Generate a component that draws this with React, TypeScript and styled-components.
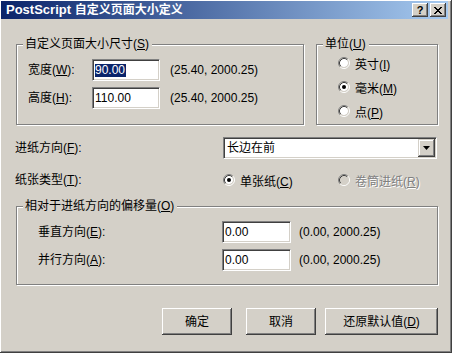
import React from 'react'
import styled, { createGlobalStyle } from 'styled-components'

const GlobalStyle = createGlobalStyle`
  html, body {
    margin: 0;
    padding: 0;
    background: #d4d0c8;
  }
  body {
    font-family: "Liberation Sans", "Noto Sans CJK SC", sans-serif;
    font-size: 12px;
    color: #000;
  }
`

const Window = styled.div`
  width: 452px;
  height: 353px;
  box-sizing: border-box;
  padding: 1px 4px 4px 1px;
  background: #d4d0c8;
  box-shadow: inset -1px -1px #404040, inset 1px 1px #fff, inset -2px -2px #808080;
  display: flex;
  flex-direction: column;
`

const TitleBar = styled.div`
  height: 18px;
  display: flex;
  align-items: center;
  padding-left: 5px;
  padding-right: 2px;
  background: linear-gradient(to right, #0a246a, #a6caf0);
  color: #fff;
  font-weight: bold;
  font-size: 13px;
  line-height: 18px;
`

const TitleText = styled.div`
  flex: 1;
  white-space: nowrap;
  span {
    font-size: 12px;
  }
`

const CaptionButton = styled.div`
  width: 16px;
  height: 14px;
  box-sizing: border-box;
  margin-left: 2px;
  background: #d4d0c8;
  box-shadow: inset -1px -1px #404040, inset 1px 1px #fff, inset -2px -2px #808080;
  color: #000;
  font-size: 11px;
  line-height: 14px;
  text-align: center;
  display: flex;
  align-items: center;
  justify-content: center;
`

const Body = styled.div`
  flex: 1;
  padding: 25px 10px 0 14px;
  display: flex;
  flex-direction: column;
`

const TopRow = styled.div`
  display: flex;
  gap: 12px;
  margin-left: 1px;
`

const Group = styled.div<{ $w?: number; $h: number; $pt: number; $pl: number }>`
  position: relative;
  box-sizing: border-box;
  width: ${p => (p.$w ? `${p.$w}px` : 'auto')};
  height: ${p => p.$h}px;
  border: 1px solid #808080;
  box-shadow: 1px 1px #fff, inset 1px 1px #fff;
  padding: ${p => p.$pt}px 0 0 ${p => p.$pl}px;
`

const GroupLabel = styled.div`
  position: absolute;
  top: -8px;
  left: 6px;
  padding: 0 3px 0 2px;
  background: #d4d0c8;
  line-height: 15px;
  white-space: nowrap;
`

const Key = styled.u`
  text-underline-offset: 1px;
`

const FieldRow = styled.div<{ $gap?: number }>`
  display: flex;
  align-items: center;
  height: 22px;
  & + & {
    margin-top: ${p => p.$gap ?? 6}px;
  }
`

const Label = styled.div<{ $w: number }>`
  width: ${p => p.$w}px;
  flex-shrink: 0;
  white-space: nowrap;
  line-height: 16px;
`

const Sunken = styled.div<{ $w: number }>`
  width: ${p => p.$w}px;
  height: 22px;
  box-sizing: border-box;
  flex-shrink: 0;
  background: #fff;
  border-style: solid;
  border-width: 1px;
  border-color: #808080 #fff #fff #808080;
  box-shadow: inset 1px 1px #404040, inset -1px -1px #d4d0c8;
  line-height: 20px;
  white-space: nowrap;
`

const FieldText = styled.span<{ $selected?: boolean }>`
  display: inline-block;
  margin-left: 2px;
  line-height: 13px;
  padding: 0 1px 0 0;
  background: ${p => (p.$selected ? '#0a246a' : 'transparent')};
  color: ${p => (p.$selected ? '#fff' : '#000')};
  vertical-align: middle;
`

const Range = styled.div<{ $ml: number }>`
  margin-left: ${p => p.$ml}px;
  white-space: nowrap;
`

const RadioList = styled.div`
  display: flex;
  flex-direction: column;
`

const RadioItem = styled.div<{ $w?: number; $disabled?: boolean }>`
  display: flex;
  align-items: center;
  gap: 5px;
  height: 24px;
  width: ${p => (p.$w ? `${p.$w}px` : 'auto')};
  white-space: nowrap;
  color: ${p => (p.$disabled ? '#808080' : '#000')};
  text-shadow: ${p => (p.$disabled ? '1px 1px #fff' : 'none')};
`

const FormRow = styled.div<{ $mt: number }>`
  display: flex;
  align-items: center;
  height: 22px;
  margin-top: ${p => p.$mt}px;
`

const SelectBox = styled(Sunken)`
  display: flex;
  align-items: center;
  padding-left: 3px;
`

const SelectValue = styled.div`
  flex: 1;
`

const DropButton = styled.div`
  width: 17px;
  height: 18px;
  box-sizing: border-box;
  margin-right: 1px;
  background: #d4d0c8;
  box-shadow: inset -1px -1px #404040, inset 1px 1px #d4d0c8, inset -2px -2px #808080, inset 2px 2px #fff;
  display: flex;
  align-items: center;
  justify-content: center;
`

const ButtonRow = styled.div`
  display: flex;
  justify-content: flex-end;
  margin-top: 23px;
`

const PushButton = styled.div<{ $w: number; $ml: number }>`
  width: ${p => p.$w}px;
  height: 27px;
  box-sizing: border-box;
  margin-left: ${p => p.$ml}px;
  background: #d4d0c8;
  box-shadow: inset -1px -1px #404040, inset 1px 1px #fff, inset -2px -2px #808080;
  display: flex;
  align-items: center;
  justify-content: center;
  line-height: 16px;
  white-space: nowrap;
`

const Radio = ({ checked, disabled }: { checked?: boolean; disabled?: boolean }) => (
  <svg width="12" height="12" viewBox="0 0 12 12" style={{ flexShrink: 0 }}>
    <circle cx="6" cy="6" r="4" fill={disabled ? '#d4d0c8' : '#fff'} />
    <path d="M2.11 9.89 A5.5 5.5 0 0 1 9.89 2.11" stroke="#808080" fill="none" />
    <path d="M9.89 2.11 A5.5 5.5 0 0 1 2.11 9.89" stroke="#fff" fill="none" />
    <path d="M2.82 9.18 A4.5 4.5 0 0 1 9.18 2.82" stroke="#404040" fill="none" />
    <path d="M9.18 2.82 A4.5 4.5 0 0 1 2.82 9.18" stroke="#d4d0c8" fill="none" />
    {checked && <circle cx="6" cy="6" r="2" fill="#000" />}
  </svg>
)

const App = () => {
  return (
    <>
      <GlobalStyle />
      <Window>
        <TitleBar>
          <TitleText>
            PostScript <span>自定义页面大小定义</span>
          </TitleText>
          <CaptionButton>?</CaptionButton>
          <CaptionButton>
            <svg width="8" height="7" viewBox="0 0 8 7">
              <path d="M0 0 L7 7 M1 0 L8 7 M7 0 L0 7 M8 0 L1 7" stroke="#000" strokeWidth="1" shapeRendering="crispEdges" />
            </svg>
          </CaptionButton>
        </TitleBar>

        <Body>
          <TopRow>
            <Group $w={288} $h={81} $pt={14} $pl={11}>
              <GroupLabel>
                自定义页面大小尺寸(<Key>S</Key>)
              </GroupLabel>
              <FieldRow>
                <Label $w={64}>
                  宽度(<Key>W</Key>):
                </Label>
                <Sunken $w={68}>
                  <FieldText $selected>90.00</FieldText>
                </Sunken>
                <Range $ml={10}>(25.40, 2000.25)</Range>
              </FieldRow>
              <FieldRow>
                <Label $w={64}>
                  高度(<Key>H</Key>):
                </Label>
                <Sunken $w={68}>
                  <FieldText>110.00</FieldText>
                </Sunken>
                <Range $ml={10}>(25.40, 2000.25)</Range>
              </FieldRow>
            </Group>

            <Group $w={122} $h={81} $pt={6} $pl={21}>
              <GroupLabel>
                单位(<Key>U</Key>)
              </GroupLabel>
              <RadioList>
                <RadioItem>
                  <Radio />
                  <span>
                    英寸(<Key>I</Key>)
                  </span>
                </RadioItem>
                <RadioItem>
                  <Radio checked />
                  <span>
                    毫米(<Key>M</Key>)
                  </span>
                </RadioItem>
                <RadioItem>
                  <Radio />
                  <span>
                    点(<Key>P</Key>)
                  </span>
                </RadioItem>
              </RadioList>
            </Group>
          </TopRow>

          <FormRow $mt={12}>
            <Label $w={208}>
              进纸方向(<Key>F</Key>):
            </Label>
            <SelectBox $w={214}>
              <SelectValue>长边在前</SelectValue>
              <DropButton>
                <svg width="7" height="4" viewBox="0 0 7 4">
                  <path d="M0 0 H7 L3.5 4 Z" fill="#000" />
                </svg>
              </DropButton>
            </SelectBox>
          </FormRow>

          <FormRow $mt={10}>
            <Label $w={208}>
              纸张类型(<Key>T</Key>):
            </Label>
            <RadioItem $w={115}>
              <Radio checked />
              <span>
                单张纸(<Key>C</Key>)
              </span>
            </RadioItem>
            <RadioItem $disabled>
              <Radio disabled />
              <span>
                卷筒进纸(<Key>R</Key>)
              </span>
            </RadioItem>
          </FormRow>

          <Group $h={79} $pt={14} $pl={21} style={{ marginTop: 15, marginLeft: 1 }}>
            <GroupLabel>
              相对于进纸方向的偏移量(<Key>O</Key>)
            </GroupLabel>
            <FieldRow>
              <Label $w={184}>
                垂直方向(<Key>E</Key>):
              </Label>
              <Sunken $w={69}>
                <FieldText>0.00</FieldText>
              </Sunken>
              <Range $ml={8}>(0.00, 2000.25)</Range>
            </FieldRow>
            <FieldRow>
              <Label $w={184}>
                并行方向(<Key>A</Key>):
              </Label>
              <Sunken $w={69}>
                <FieldText>0.00</FieldText>
              </Sunken>
              <Range $ml={8}>(0.00, 2000.25)</Range>
            </FieldRow>
          </Group>

          <ButtonRow>
            <PushButton $w={70} $ml={0}>确定</PushButton>
            <PushButton $w={70} $ml={14}>取消</PushButton>
            <PushButton $w={113} $ml={9}>
              还原默认值(<Key>D</Key>)
            </PushButton>
          </ButtonRow>
        </Body>
      </Window>
    </>
  )
}

export default App
